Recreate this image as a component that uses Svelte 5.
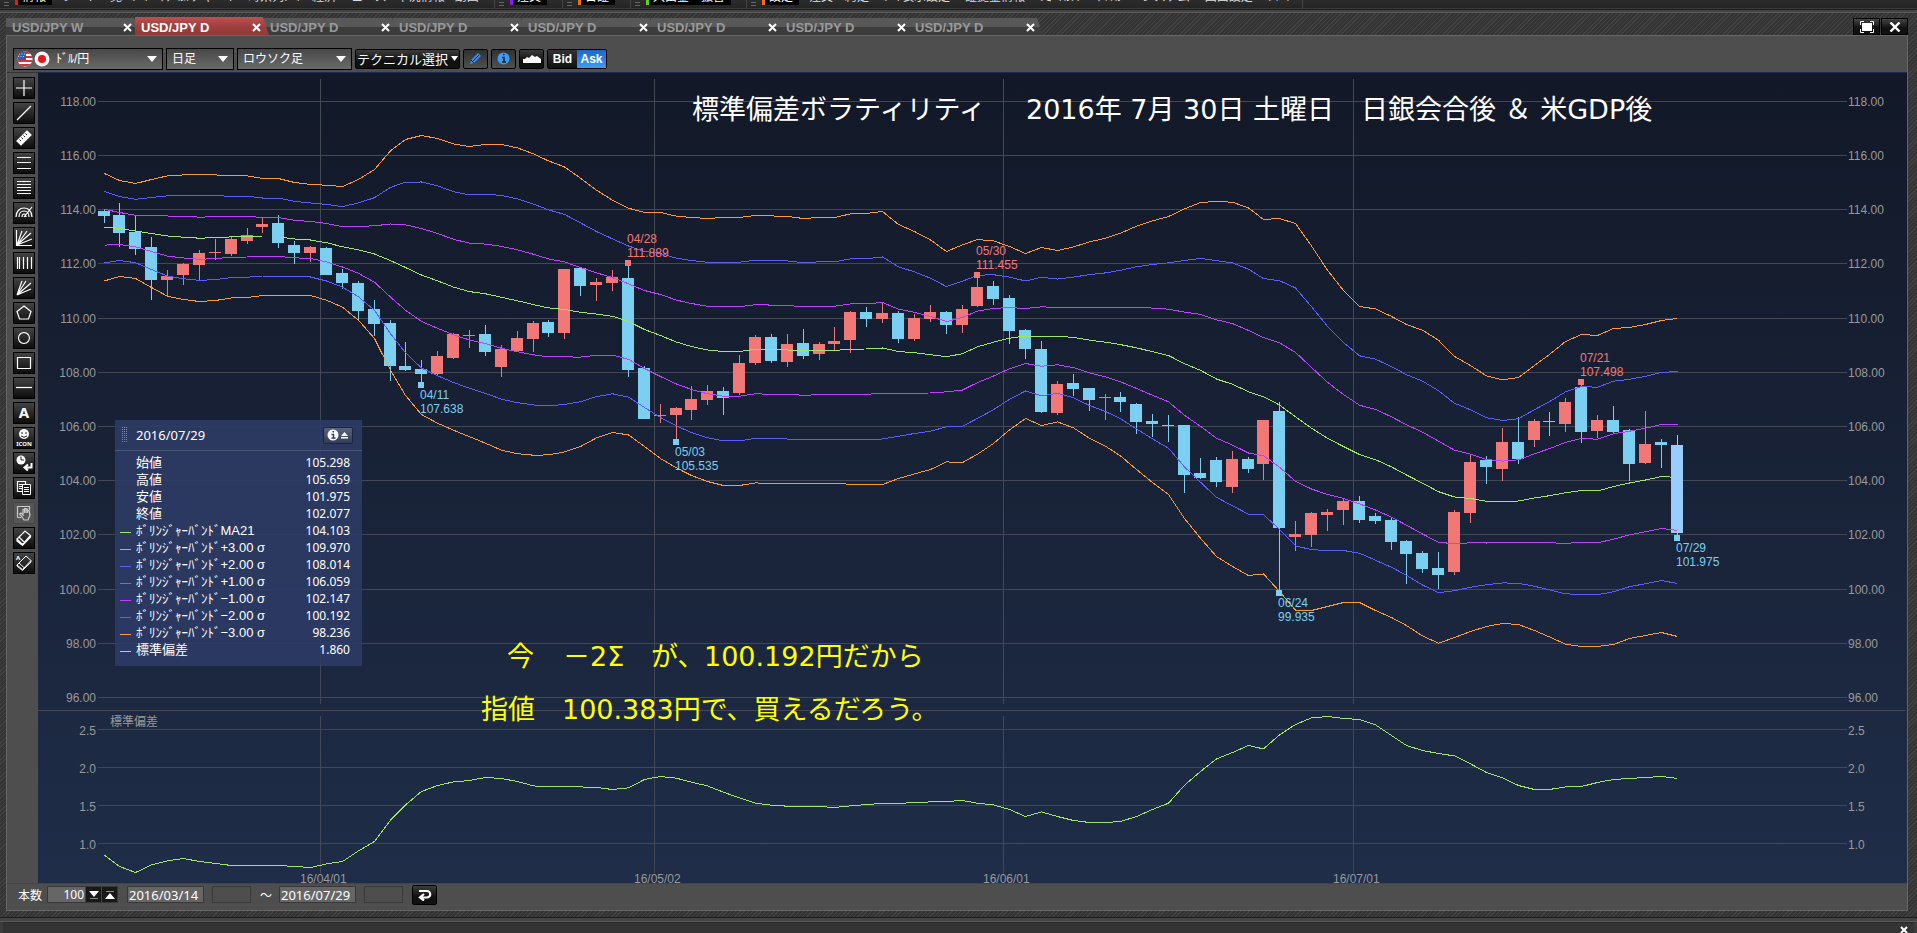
<script>
  const menus = [
    { id: 'quotes', tag: '情報', color: '#e02010', items: ['レート一覧', 'ﾚｰﾄ', 'ﾃｸﾆｶﾙチャート', '時系列ﾚｰﾄ', '経済 ニュース', '市況情報', '動画'] },
    { id: 'order', tag: '注文', color: '#8a20e0', items: [] },
    { id: 'history', tag: '日証', color: '#f07010', items: [] },
    { id: 'cash', tag: '入出金・振替', color: '#60d010', items: [] },
    { id: 'setup', tag: '設定', color: '#f07010', items: ['注文・約定', 'ﾚｰﾄ表示設定', '証拠金情報', 'ｼｮｰﾄｶｯﾄ', 'ﾃｨｯｶｰ', 'システム', '画面設定', 'ﾂｲｰﾄ'] }
  ];

  const tabs = ['USD/JPY W', 'USD/JPY D', 'USD/JPY D', 'USD/JPY D', 'USD/JPY D', 'USD/JPY D', 'USD/JPY D', 'USD/JPY D'];
  let active = $state(1);

  const tools = [
    { name: 'クロス', d: 'M11 3V19M3 11H19' },
    { name: 'トレンドライン', d: 'M4 18L18 4' },
    { name: '定規', d: 'M4 14L14 4L18 8L8 18Z', fill: true, extra: 'M6.500 12.500L8 14M8.500 10.500L10 12M10.500 8.500L12 10M12.500 6.500L14 8', dark: true },
    { name: '水平線3本', d: 'M4 5.500H18M4 10.500H18M4 16.500H18' },
    { name: '水平線5本', d: 'M4 4.500H18M4 7.500H18M4 10.500H18M4 13.500H18M4 16.500H18' },
    { name: 'アーク', d: 'M3 15C3 3 19 3 19 15M6 15C6 7 16 7 16 15M9 15C9 11 13 11 13 15M11 15L19 5' },
    { name: 'ファン', d: 'M4 18L9 4M4 18L14 4M4 18L18 6M4 18L19 12M3.500 3V18.500H19' },
    { name: '垂直線', d: 'M4.500 5V17M6.500 5V17M10.500 5V17M14.500 5V17M18.500 5V17' },
    { name: 'スピード', d: 'M4 18L9 4M4 18L13 4M4 18L18 6M4 18L18 12' },
    { name: '五角形', d: 'M11 4L18 9.500L15.500 17H6.500L4 9.500Z' },
    { name: '円', d: 'M11 5.500A5.500 5.500 0 1 1 10.900 5.500Z' },
    { name: '四角形', d: 'M4.500 5.500H17.500V16.500H4.500Z' },
    { name: '水平線', d: 'M3 10.500H19' },
    { name: 'テキスト', kind: 'a' },
    { name: 'アイコン', kind: 'icon' },
    { name: '時間', kind: 'clock' },
    { name: 'コピー', d: 'M4.500 4.500H12.500V14.500H4.500ZM6 7.500H11M6 9.500H9M6 11.500H9', extra: 'M9.500 7.500H17.500V17.500H9.500ZM11 10.500H16M11 12.500H16M11 14.500H16', box: true },
    { name: '移動', off: true, d: 'M4.500 15.500V4.500H16.500V8M4.500 15.500H8M9 15L6.500 12L8 11L10 13V7.500H11.500V11V6.500H13V11V7H14.500V11V8.500H16L17 13L15 18H11Z' },
    { name: '消しゴム', d: 'M4 12L12 4L17.500 8.500L9.500 17.500ZM4 12V14L9.500 18.500L17.500 10V8.500M6 10L11.500 15.500' },
    { name: '全消去', kind: 'erase' }
  ];

  const STEP = 15.89;
  const cx = (i) => Math.floor(104 + i * STEP);

  // d: 1 = rising, 0 = falling, 2 = current bar; then body top, body bottom, high, low
  const bars = [
    [0,211,216,210,223],[0,215,233,203,247],[0,232,249,215,255],[0,247,280,237,300],[1,276,280,270,296],
    [1,264,275,263,285],[1,253,265,250,280],[1,252,253,239,260],[1,239,254,237,256],[1,235,241,228,244],
    [1,224,227,217,233],[0,223,243,215,248],[0,245,253,241,264],[1,247,253,246,262],[0,248,275,247,275],
    [0,273,283,269,289],[0,283,311,281,320],[0,309,324,300,336],[0,323,366,320,381],[0,366,370,342,371],
    [0,369,374,360,382],[1,356,374,351,376],[1,334,358,333,359],[1,335,336,330,348],[0,334,352,325,356],
    [1,349,367,345,377],[1,338,351,331,352],[1,323,339,321,352],[0,322,333,320,337],[1,269,333,269,339],
    [0,268,286,268,296],[1,282,285,278,301],[1,277,283,270,291],[0,278,370,266,377],[0,368,419,366,419],
    [1,415,416,404,423],[1,408,415,407,439],[1,399,410,386,420],[1,391,400,385,405],[0,391,398,387,415],
    [1,363,393,355,395],[1,337,363,335,365],[0,337,361,334,363],[1,344,362,334,367],[0,343,356,329,359],
    [1,344,354,342,360],[1,341,344,327,350],[1,312,340,311,353],[0,312,319,307,327],[1,313,319,303,323],
    [0,313,339,311,343],[1,318,339,314,341],[1,312,319,305,322],[0,312,325,311,334],[1,309,325,305,333],
    [1,287,306,278,307],[0,286,299,281,305],[0,298,331,295,344],[0,330,349,329,359],[0,349,412,341,413],
    [1,384,413,381,415],[0,383,389,374,396],[0,388,400,388,411],[1,397,398,394,420],[0,397,402,392,412],
    [0,404,422,403,434],[0,421,424,414,437],[0,425,426,415,442],[0,425,475,425,493],[0,473,478,458,479],
    [0,460,482,457,487],[1,459,487,451,493],[0,459,469,457,473],[1,420,464,420,480],[0,411,528,402,590],
    [1,534,537,521,551],[1,513,535,512,547],[1,512,515,509,531],[1,501,510,499,525],[0,501,520,496,523],
    [0,516,521,513,524],[0,520,542,518,550],[0,541,554,540,584],[0,553,569,551,573],[0,568,575,552,589],
    [1,512,572,510,575],[1,462,513,454,523],[0,460,467,456,484],[1,442,469,428,481],[0,442,459,417,464],
    [1,421,440,419,447],[0,421,422,412,436],[1,402,424,398,432],[0,387,432,385,443],[1,420,431,415,438],
    [0,420,432,406,433],[0,430,464,429,481],[1,444,463,411,464],[0,442,445,439,468],[2,445,533,435,535]
  ];
  const barColors = ['#7bcff0', '#f27878', '#99ccff'];

  // outermost bands (three deviations above and below the average)
  const upper = [173.3,180.3,183.3,179.3,175.7,174.7,174.7,174.7,175.7,175.7,178.3,178.3,182.3,184.3,185,186.3,179.3,169.3,150.7,139.3,
    135.3,138.3,143.7,146.3,144.3,144.3,147.7,153.7,160.7,166.7,178,190,200,208,212.3,212.3,216,217.3,218.3,217.3,
    217.3,215.3,215.7,216.3,218.3,217.3,217.3,213.7,213.3,211.3,224.3,231.3,239.7,251.3,244.7,239.3,240.7,246.3,253.3,247.3,
    250.3,246.7,241.7,238,233,226,220.7,216.3,208.7,202.3,201.3,202,207.7,219.3,218.3,223.3,245.7,270,290.3,306.3,
    308.7,316.2,324.3,330,340,356.3,365.3,375.7,379.7,377.3,365.3,354.3,341.3,334.3,335.3,328.3,327.3,324.3,320.3,318.3];
  const lower = [280.7,276.3,278.3,287.3,296,299.3,301.3,300.3,297.7,297.3,295.3,295.3,295.3,295.3,300,307,320,338.3,370,395.3,
    414.3,423,430,436.5,443,450,453.5,455,454.7,451.7,446.3,437.7,432.3,434.7,446.3,458.3,467.7,475.3,481.3,485.3,
    485.3,482.7,483.3,483.3,483.3,483.3,483.3,484,484.3,484.3,478.3,473.7,469.3,461.7,462.3,454,443.3,429.7,418.3,425.3,
    421.7,427.7,438,446,455.7,469.3,482.3,494.3,518.3,538,556.3,566.3,575.3,573.7,591.3,610,610.3,606.3,602.3,602.3,
    610.3,617.3,625.3,635.7,643,637.3,631.3,626.3,623.3,624.3,630.3,636.7,644,646.3,646.3,644.3,638.3,635.3,632.3,636.3];
  const deviation = [855,866.3,872.3,864.7,860.7,858.3,861.3,863.3,865.3,865.3,865.3,865.3,866.3,867.3,863.7,861.3,850.7,841.3,820,804.7,
    791.3,785.3,781.7,780.3,777.3,778.3,781.3,785.7,786.7,786.7,786.7,787.3,789.3,787.7,779.3,776.3,778,782,785.7,792,
    797.7,803,805,806,806.3,806.3,807.3,805.7,804.3,803.3,803.3,802.3,801.7,801.3,800.3,803,804.7,809.3,816.3,811.7,
    816.3,820.3,822.3,822.3,821.3,816.3,809.3,803,785,771.3,758.7,752.3,745.3,748.7,734.7,724.3,717.7,716.3,718.3,719.3,
    724.7,735.3,745.3,750.3,753.3,755.7,763.7,772.3,777.7,785.3,789.3,789.3,786.7,786.3,782.3,779.3,778.3,777.3,776.3,778.3];

  const trace = (ys) => ys.map((y, i) => `${cx(i) + 0.5},${(y + 0.2).toFixed(1)}`).join(' ');
  const band = (k) => trace(upper.map((u, i) => (u + lower[i]) / 2 - (k * (lower[i] - u)) / 6));
  const bands = [
    [3, '#ff9a33'], [2, '#5c5cff'], [1, '#c040ff'], [0, '#a0e860'], [-1, '#c040ff'], [-2, '#5c5cff'], [-3, '#ff9a33']
  ];

  const priceGrid = [101, 155, 209, 263, 318, 372, 426, 480, 534, 589, 643, 697].map((y, i) => ({ y, label: (118 - i * 2).toFixed(2) }));
  const devGrid = [729, 767, 805, 843].map((y, i) => ({ y, label: (2.5 - i * 0.5).toFixed(1) }));
  const months = [[320, '16/04/01'], [654, '16/05/02'], [1003, '16/06/01'], [1353, '16/07/01']];

  const peaks = [
    { i: 20, low: true, date: '04/11', price: '107.638' },
    { i: 33, low: false, date: '04/28', price: '111.889' },
    { i: 36, low: true, date: '05/03', price: '105.535' },
    { i: 55, low: false, date: '05/30', price: '111.455' },
    { i: 74, low: true, date: '06/24', price: '99.935' },
    { i: 93, low: false, date: '07/21', price: '107.498' },
    { i: 99, low: true, date: '07/29', price: '101.975' }
  ];

  const legend = [
    ['', '始値', '105.298'], ['', '高値', '105.659'], ['', '安値', '101.975'], ['', '終値', '102.077'],
    ['green', 'ﾎﾞﾘﾝｼﾞｬｰﾊﾞﾝﾄﾞMA21', '104.103'],
    ['orange', 'ﾎﾞﾘﾝｼﾞｬｰﾊﾞﾝﾄﾞ+3.00 σ', '109.970'],
    ['blue', 'ﾎﾞﾘﾝｼﾞｬｰﾊﾞﾝﾄﾞ+2.00 σ', '108.014'],
    ['purple', 'ﾎﾞﾘﾝｼﾞｬｰﾊﾞﾝﾄﾞ+1.00 σ', '106.059'],
    ['purple', 'ﾎﾞﾘﾝｼﾞｬｰﾊﾞﾝﾄﾞ−1.00 σ', '102.147'],
    ['blue', 'ﾎﾞﾘﾝｼﾞｬｰﾊﾞﾝﾄﾞ−2.00 σ', '100.192'],
    ['orange', 'ﾎﾞﾘﾝｼﾞｬｰﾊﾞﾝﾄﾞ−3.00 σ', '98.236'],
    ['green', '標準偏差', '1.860']
  ];
</script>

<div class="app">
  <header class="topbar">
    <nav class="menus">
      {#each menus as m}
        <div class="menu {m.id}">
          <span class="grip"></span>
          <span class="tag"><i style="background:{m.color}"></i>{m.tag}</span>
          {#each m.items as item}<a href="#top">{item}</a>{/each}
        </div>
      {/each}
    </nav>
  </header>
  <div class="rule"></div>

  <main class="workspace">
    <div class="tabs">
      <div class="tablist">
        {#each tabs as t, i}
          <div class="tab" class:active={i === active}>
            <button class="name" onclick={() => (active = i)}>{t}</button>
            <button class="close" aria-label="閉じる"><svg width="9" height="9" viewBox="0 0 9 9"><path d="M1 1L8 8M8 1L1 8" stroke="#fff" stroke-width="2" /></svg></button>
          </div>
        {/each}
      </div>
      <div class="winbtns">
        <button aria-label="最大化"><svg width="16" height="12" viewBox="0 0 16 12"><path d="M3 2H13V10H3Z" fill="#fff" /><path d="M1.500 4V0.500H5M11 0.500H14.500V4M14.500 8V11.500H11M5 11.500H1.500V8" fill="none" stroke="#fff" /></svg></button>
        <button aria-label="ウィンドウを閉じる"><svg width="12" height="10" viewBox="0 0 12 10"><path d="M1.500 0.500L10.500 9.500M10.500 0.500L1.500 9.500" stroke="#fff" stroke-width="2.400" /></svg></button>
      </div>
    </div>

    <section class="panel">
      <div class="toolbar">
        <div class="combo pair">
          <svg class="flags" width="34" height="16" viewBox="0 0 34 16" aria-hidden="true">
            <clipPath id="usa"><circle cx="8" cy="8" r="7.500" /></clipPath>
            <g clip-path="url(#usa)"><rect width="16" height="16" fill="#fff" /><path d="M0 2H16M0 6H16M0 10H16M0 14H16" stroke="#d83038" stroke-width="2" /><rect width="9" height="9" fill="#3858a8" /><path d="M2 3H8M1 5.500H8" stroke="#c8d4f0" stroke-dasharray="1 1.500" /></g>
            <circle cx="25" cy="8" r="7.500" fill="#f4f4f4" /><circle cx="25" cy="8" r="4" fill="#e01818" />
          </svg>
          <select aria-label="通貨ペア"><option>ﾄﾞﾙ/円</option></select>
        </div>
        <div class="combo span"><select aria-label="足種"><option>日足</option></select></div>
        <div class="combo style"><select aria-label="チャート種類"><option>ロウソク足</option></select></div>
        <button class="btn tech">テクニカル選択<svg width="7" height="5" viewBox="0 0 7 5"><path d="M0 0H7L3.500 5Z" fill="#fff" /></svg></button>
        <button class="btn small lit" aria-label="描画"><svg width="15" height="15" viewBox="0 0 15 15"><path d="M2 13L3 9L10 2L13 5L6 12Z" fill="#3c8ce0" /><path d="M4.500 10.500L11 4M3 9L6 12" stroke="#123" fill="none" /></svg></button>
        <button class="btn small lit" aria-label="情報"><svg width="13" height="13" viewBox="0 0 13 13"><circle cx="6.500" cy="6.500" r="6" fill="#3c9cf0" /><path d="M5 5.500H7V10M5 10H9M6 2.500H7.500" stroke="#222" stroke-width="1.500" fill="none" /></svg></button>
        <button class="btn small" aria-label="エリア"><svg width="18" height="9" viewBox="0 0 18 9"><path d="M0 9V5L2 5L4 3L6 4L9 1L12 3L14 2L18 5V9Z" fill="#fff" /></svg></button>
        <div class="bidask"><button>Bid</button><button class="on">Ask</button></div>
      </div>

      <div class="body">
        <aside class="tools">
          {#each tools as t}
            <button class:off={t.off} aria-label={t.name}>
              <svg width="22" height="22" viewBox="0 0 22 22">
                {#if t.kind === 'a'}
                  <text x="11" y="16" text-anchor="middle" class="big">A</text>
                {:else if t.kind === 'icon'}
                  <circle cx="11" cy="7" r="5" fill="#fff" /><path d="M9 5V7M13 5V7M8 9Q11 11.500 14 9" stroke="#222" fill="none" />
                  <text x="11" y="19" text-anchor="middle" class="mini">ICON</text>
                {:else if t.kind === 'clock'}
                  <circle cx="8" cy="8" r="4.500" fill="#fff" /><path d="M8 4.500V8H11" stroke="#222" fill="none" /><path d="M18.500 11V15.500H12M15 12.500L11.500 15.500L15 18.500" stroke="#fff" stroke-width="2" fill="none" />
                {:else if t.kind === 'erase'}
                  <text x="5" y="8" text-anchor="middle" class="mini">A</text>
                  <path d="M4 13L13 4L18 8.500L9.500 17.500ZM4 13V14L9.500 18.500L18 10V8.500M6 11L11.500 16" stroke="#fff" fill="none" />
                {:else}
                  <path d={t.d} stroke="#fff" stroke-width="1.200" fill={t.fill ? '#fff' : 'none'} />
                  {#if t.extra}<path d={t.extra} stroke={t.dark ? '#222' : '#fff'} fill={t.box ? '#181818' : 'none'} />{/if}
                {/if}
              </svg>
            </button>
          {/each}
        </aside>

        <div class="chart">
          <svg viewBox="38 72 1869 811" role="img" aria-label="USD/JPY 日足チャート">
            <defs>
              <linearGradient id="night" x1="0" y1="0" x2="0" y2="1"><stop offset="0" stop-color="#121827" /><stop offset="1" stop-color="#1f2d48" /></linearGradient>
            </defs>
            <rect x="38" y="72" width="1869" height="811" fill="url(#night)" />
            <path d="M38 72.500H1907" stroke="#1c2c4c" />
            <g stroke="#444854" shape-rendering="crispEdges">
              {#each [...priceGrid, ...devGrid] as g}<path d="M98 {g.y + 0.5}H1847" />{/each}
              {#each months as [x]}<path d="M{x + 0.5} 79V704M{x + 0.5} 716V873" />{/each}
              <path d="M38 710.500H1906" />
            </g>
            <g class="axis">
              {#each priceGrid as g}<text x="96" y={g.y + 5} text-anchor="end">{g.label}</text><text x="1848" y={g.y + 5}>{g.label}</text>{/each}
              {#each devGrid as g}<text x="96" y={g.y + 6} text-anchor="end">{g.label}</text><text x="1848" y={g.y + 6}>{g.label}</text>{/each}
              {#each months as [x, label]}<text x={x - 20} y="883">{label}</text>{/each}
              <text x="110" y="726">標準偏差</text>
            </g>
            <g shape-rendering="crispEdges">
              {#each bars as [d, top, bottom, high, low], i}
                <rect x={cx(i)} y={high} width="1" height={low - high} fill={barColors[d]} />
                <rect x={cx(i) - 6} y={top} width="12" height={bottom - top} fill={barColors[d]} />
              {/each}
            </g>
            <g fill="none" shape-rendering="crispEdges">
              {#each bands as [k, color]}<polyline points={band(k)} stroke={color} />{/each}
              <polyline points={trace(deviation)} stroke="#a0e860" />
            </g>
            {#each peaks as p}
              {@const y = p.low ? bars[p.i][4] : bars[p.i][3]}
              <g class="peak" fill={p.low ? '#7bcff0' : '#f27878'}>
                <rect x={cx(p.i) - 3} y={p.low ? y : y - 6} width="6" height="6" />
                <text x={cx(p.i) - 1} y={p.low ? y + 17 : y - 23}>{p.date}</text>
                <text x={cx(p.i) - 1} y={p.low ? y + 31 : y - 9}>{p.price}</text>
              </g>
            {/each}
            <g class="note" fill="#fff">
              <text x="692" y="119">標準偏差ボラティリティ</text>
              <text x="1026" y="119">2016年 7月 30日 土曜日</text>
              <text x="1361" y="119">日銀会合後 ＆ 米GDP後</text>
            </g>
            <g class="note" fill="#ffff00">
              <text x="507" y="666">今</text>
              <text x="563" y="666">－2Σ</text>
              <text x="651" y="666">が、</text>
              <text x="704" y="666">100.192円だから</text>
              <text x="481" y="719">指値</text>
              <text x="562" y="719">100.383円で、買えるだろう。</text>
            </g>
          </svg>

          <div class="databox">
            <div class="head">
              <svg class="dots" width="6" height="16" viewBox="0 0 6 16" aria-hidden="true"><path d="M0.500 0V16M2.500 0V16M4.500 0V16" stroke="#8088a0" stroke-dasharray="1 1" /></svg>
              <span class="date">2016/07/29</span>
              <button aria-label="情報パネルを閉じる"><svg width="24" height="12" viewBox="0 0 24 12"><circle cx="7" cy="6" r="5.500" fill="#fff" /><path d="M5.500 5.500H7.500V9M5.500 9H9.500M6.500 2.800H8" stroke="#2b385f" stroke-width="1.400" fill="none" /><path d="M15 7L18.500 3L22 7ZM15 8H22V9.500H15Z" fill="#fff" /></svg></button>
            </div>
            <table>
              <tbody>
                {#each legend as [color, name, value]}
                  <tr><td class="key"><i class={color}></i></td><th scope="row">{name}</th><td class="val">{value}</td></tr>
                {/each}
              </tbody>
            </table>
          </div>
        </div>
      </div>

      <form class="range" onsubmit={(e) => e.preventDefault()}>
        <label for="count">本数</label>
        <div class="stepper">
          <input id="count" value="100" />
          <button type="button" aria-label="減らす"><svg width="10" height="10" viewBox="0 0 10 10"><path d="M0 1H10L5 7ZM1 8.500H9V9H1Z" fill="#fff" /></svg></button>
          <button type="button" aria-label="増やす"><svg width="10" height="10" viewBox="0 0 10 10"><path d="M0 9H10L5 3ZM1 1H9V1.500H1Z" fill="#fff" /></svg></button>
        </div>
        <input class="day" aria-label="開始日" value="2016/03/14" />
        <input class="time" aria-label="開始時刻" />
        <span class="tilde">～</span>
        <input class="day" aria-label="終了日" value="2016/07/29" />
        <input class="time" aria-label="終了時刻" />
        <button class="btn back" aria-label="更新"><svg width="14" height="12" viewBox="0 0 14 12"><path d="M1 2H9A3.200 3.200 0 0 1 9 8.500H4M6 5L2 8.500L6 11.500" stroke="#fff" stroke-width="2.200" fill="none" /></svg></button>
      </form>
    </section>
  </main>

  <div class="rule lower"></div>
  <footer class="status"><button aria-label="ティッカーを閉じる"><svg width="8" height="8" viewBox="0 0 8 8"><path d="M1 1L7 7M7 1L1 7" stroke="#fff" stroke-width="2" /></svg></button></footer>
</div>

<style>
  :global(body) { background: #3c3c3c; }
  .app { font-family: "Liberation Sans", "Noto Sans CJK JP", sans-serif; font-size: 12px; color: #fff; overflow: hidden; }
  .app :global(*) { box-sizing: border-box; }
  button, input, select { font: inherit; color: inherit; margin: 0; padding: 0; border: 0; background: none; border-radius: 0; }
  svg { display: block; }

  .topbar { height: 9px; overflow: hidden; background: linear-gradient(#2c2c2c, #242424); border-bottom: 1px solid #3c3c3c; }
  .menus { display: flex; margin-top: -10px; white-space: nowrap; }
  .menu { flex: none; display: flex; align-items: flex-start; gap: 10px; line-height: 15px; height: 19px; border-right: 1px solid #444; padding-left: 4px; }
  .menu.quotes { width: 495px; }
  .menu.order { width: 68px; }
  .menu.history { width: 68px; }
  .menu.cash { width: 116px; }
  .menu.setup { width: 556px; }
  .menu.setup a + a { margin-left: 5px; }
  .menu a { color: #ddd; text-decoration: none; }
  .grip { flex: none; width: 5px; height: 16px; margin-right: -4px; background: repeating-linear-gradient(#666 0 1px, transparent 1px 3px); }
  .tag { flex: none; display: flex; gap: 4px; background: #000; padding-right: 6px; }
  .tag i { width: 3px; height: 15px; }

  .rule { height: 4px; background: #444; border-top: 1px solid #1c1c1c; border-bottom: 1px solid #5a5a5a; }
  .rule.lower { height: 5px; }

  .workspace { background: repeating-linear-gradient(135deg, #424242 0 1px, #343434 1px 3px); padding: 0 9px 6px 6px; }
  .tabs { display: flex; justify-content: space-between; align-items: flex-end; height: 22px; }
  .tablist { display: flex; align-items: flex-end; }
  .tab { display: flex; align-items: center; justify-content: space-between; width: 134px; height: 17px; margin-right: -5px; padding: 2px 8px 0 6px; background: linear-gradient(#585858 0 50%, #3c3c3c 50%); clip-path: polygon(0 0, 128px 0, 134px 100%, 0 100%); color: #999; }
  .tab.active { background: linear-gradient(#c05050, #a04040 50%, #903838); color: #fff; z-index: 1; height: 18px; }
  .tab .name { font-weight: bold; font-size: 13px; line-height: 15px; }
  .winbtns { display: flex; gap: 1px; }
  .winbtns button { display: grid; place-items: center; width: 27px; height: 17px; border: 1px solid #000; background: linear-gradient(#444, #111 60%); }

  .panel { background: #4e4e4e; border: 1px solid #666; }
  .toolbar { display: flex; align-items: center; gap: 3px; height: 36px; padding: 11px 6px 2px; }
  .combo { position: relative; display: flex; align-items: center; height: 22px; border: 1px solid #000; background: linear-gradient(#484848, #6a6a6a); }
  .combo::after { content: ""; position: absolute; right: 5px; border: 5px solid transparent; border-top: 6px solid #fff; border-bottom: 0; pointer-events: none; }
  .combo select { flex: 1; min-width: 0; height: 20px; padding-left: 5px; appearance: none; font-size: 12px; line-height: 18px; }
  .combo.pair { width: 150px; }
  .combo.span { width: 68px; }
  .combo.style { width: 115px; }
  .flags { margin-left: 3px; }
  .btn { display: flex; align-items: center; justify-content: center; gap: 3px; height: 20px; border: 1px solid #000; border-radius: 2px; background: linear-gradient(#3c3c3c, #111 60%); }
  .tech { width: 105px; font-size: 13px; white-space: nowrap; }
  .small { width: 25px; }
  .lit { background: linear-gradient(#303030, #505050); }
  .bidask { display: flex; height: 20px; border: 1px solid #000; border-radius: 2px; font-weight: bold; }
  .bidask button { width: 29px; background: linear-gradient(#333, #111); }
  .bidask .on { background: linear-gradient(#1c68c8, #3c9cf0); }

  .body { display: flex; align-items: stretch; }
  .tools { flex: none; width: 31px; padding: 4px 3px 0 6px; display: flex; flex-direction: column; gap: 3px; border-top: 1px solid #333; }
  .tools button { flex: none; width: 22px; height: 22px; border: 1px solid #000; background: linear-gradient(#444, #0c0c0c); }
  .tools svg { margin: -1px; }
  .tools .off { border-color: #444; background: #5a5a5a; opacity: 0.7; }
  .big { font: bold 15px "Noto Sans", sans-serif; fill: #fff; }
  .mini { font: bold 6px "Noto Sans", sans-serif; fill: #fff; }

  .chart { position: relative; flex: 1; min-width: 0; }
  .chart > svg { width: 100%; height: auto; }
  .axis text { font-size: 12px; fill: #999; }
  .peak text { font-size: 12px; }
  .note text { font-family: "DejaVu Sans", "Noto Sans CJK JP", sans-serif; font-size: 27px; }

  .databox { position: absolute; left: 77px; top: 348px; width: 247px; padding-bottom: 8px; background: rgba(46, 60, 102, 0.9); }
  .head { display: flex; align-items: center; height: 31px; padding: 0 9px 0 7px; border-bottom: 1px solid #4c5878; }
  .dots { margin-right: 8px; }
  .date { flex: 1; font: 13px "Noto Sans", sans-serif; }
  .head button { display: grid; place-items: center; width: 30px; height: 17px; border: 1px solid #1c2440; border-radius: 2px; background: linear-gradient(#5a6280, #343c58); }
  table { width: 100%; margin-top: 3px; border-collapse: collapse; }
  tr { height: 17px; }
  td, th { padding: 0; line-height: 17px; font-weight: normal; text-align: left; white-space: nowrap; }
  th { font-size: 13px; }
  .key { width: 21px; padding-left: 5px; }
  .key i { display: block; width: 11px; height: 1px; margin-top: 4px; }
  .green { background: #a0e860; }
  .orange { background: #ff9a33; }
  .blue { background: #5c5cff; }
  .purple { background: #c040ff; }
  .val { font: 12px/17px "Noto Sans", sans-serif; text-align: right; padding-right: 12px; }

  .range { display: flex; align-items: center; height: 27px; padding: 0 11px 5px; border-top: 1px solid #444; }
  .range label { width: 29px; }
  .stepper { display: flex; width: 71px; height: 17px; border: 1px solid #383838; margin-right: 9px; background: #666; }
  .stepper input { flex: 1; min-width: 0; text-align: right; padding-right: 1px; }
  .stepper button { display: grid; place-items: center; width: 16px; background: #181818; border-left: 1px solid #444; }
  .range input { font-family: "Noto Sans", sans-serif; font-size: 12px; }
  .day { width: 77px; height: 17px; margin-right: 8px; padding-left: 1px; border: 1px solid #383838; background: #666; }
  .time { width: 39px; height: 17px; border: 1px solid #383838; background: #4e4e4e; margin-right: 9px; }
  .range .day { font-size: 13px; }
  .tilde { width: 19px; }
  .back { width: 25px; height: 20px; }

  .status { display: flex; justify-content: flex-end; align-items: flex-end; height: 11px; margin: 0 3px; background: #343434; border-top: 1px solid #2a2a2a; overflow: hidden; }
  .status button { display: grid; place-items: start center; width: 20px; height: 7px; overflow: hidden; }
</style>
